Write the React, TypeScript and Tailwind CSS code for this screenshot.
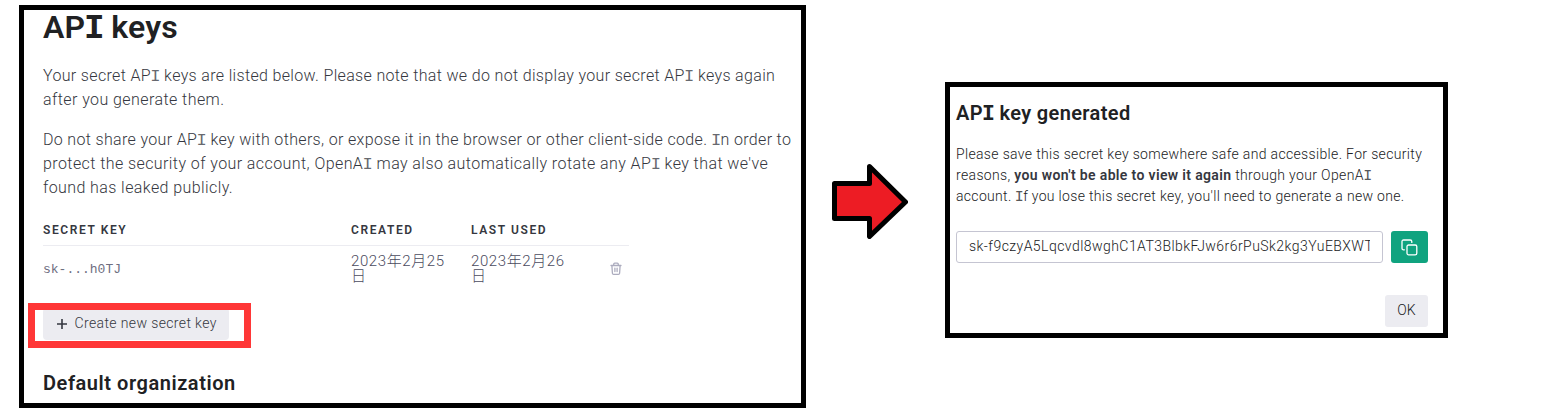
import type { ReactNode } from "react";

const I = ({ soft = false }: { soft?: boolean }) => (
  <span className={`mx-[-0.04em] inline-block text-[1.07em] leading-none tracking-normal [font-family:'Liberation_Mono',monospace] ${soft ? "opacity-75" : ""}`}>I</span>
);

function Line({ className, children }: { className?: string; children: ReactNode }) {
  return <span className={`block whitespace-nowrap ${className ?? ""}`}>{children}</span>;
}

function TrashIcon() {
  return (
    <svg className="mb-px" width="12" height="14" viewBox="0 0 12 14" fill="none" stroke="#acacbe" strokeWidth="1.3" strokeLinejoin="round" strokeLinecap="round">
      <path d="M1 3.5h10M3.7 3.4V2.2q0-1 1-1h2.6q1 0 1 1v1.2M1.9 3.6l.5 7.6q.1 1.2 1.2 1.2h4.8q1.1 0 1.2-1.2l.5-7.6M4.9 6.2v3.4M7.1 6.2v3.4" />
    </svg>
  );
}

function CopyIcon() {
  return (
    <svg width="17" height="17" viewBox="0 0 17 17" fill="none" stroke="#fff" strokeWidth="1.3" strokeLinecap="round" strokeLinejoin="round">
      <rect x="6" y="6" width="9.8" height="9.8" rx="1.6" />
      <path d="M3.4 10.8h-.8q-1.6 0-1.6-1.6V2.6Q1 1 2.6 1h6.6q1.6 0 1.6 1.6v.8" />
    </svg>
  );
}

function KeysPanel() {
  return (
    <section className="h-[403px] w-[787px] shrink-0 border-[5px] border-black pl-[19px]">
      <h1 className="mt-[-1px] h-[36px] whitespace-nowrap text-[32px] font-semibold leading-[36px] tracking-[0.2px] text-[#202123]">
        AP<I /> keys
      </h1>
      <div className="mt-[19px] text-[16px] font-light leading-[24px] text-[#353740]">
        <p>
          <Line className="h-[24px] tracking-[0.34px]">Your secret AP<I soft /> keys are listed below. Please note that we do not display your secret AP<I soft /> keys again</Line>
          <Line className="h-[24px] tracking-[0.43px]">after you generate them.</Line>
        </p>
        <p className="mt-4">
          <Line className="h-[24px] tracking-[0.34px]">Do not share your AP<I soft /> key with others, or expose it in the browser or other client-side code. <I soft />n order to</Line>
          <Line className="h-[24px] tracking-[0.42px]">protect the security of your account, OpenA<I soft /> may also automatically rotate any AP<I soft /> key that we&apos;ve</Line>
          <Line className="h-[24px] tracking-[0.41px]">found has leaked publicly.</Line>
        </p>
      </div>
      <div className="mt-[17px] w-[586px]">
        <div className="grid h-[29px] grid-cols-[308px_120px_1fr] border-b border-[#ececf1] pt-[3px] text-[12px] font-semibold leading-[20px] tracking-[1.6px] text-[#353740]">
          <span>SECRET KEY</span>
          <span>CREATED</span>
          <span>LAST USED</span>
        </div>
        <div className="grid h-[46px] grid-cols-[308px_120px_139px_1fr] items-center text-[#6e6e80]">
          <span className="pt-[2px] text-[13px] leading-[18px] [font-family:'Liberation_Mono',monospace]">sk-...h0TJ</span>
          <span className="w-[96px] whitespace-nowrap text-[15px] font-light leading-[15px] tracking-[0.6px] text-[#4b4b5e]">2023年2月25<br />日</span>
          <span className="w-[96px] whitespace-nowrap text-[15px] font-light leading-[15px] tracking-[0.6px] text-[#4b4b5e]">2023年2月26<br />日</span>
          <TrashIcon />
        </div>
      </div>
      <div className="relative mt-[16px] w-[186px]">
        <button className="flex h-[32px] w-[186px] items-center rounded bg-[#ececf1] pl-[14px] text-[14px] font-light text-[#353740]">
          <svg width="10" height="10" viewBox="0 0 10 10" stroke="#353740" strokeWidth="1.6"><path d="M5 0v10M0 5h10" /></svg>
          <span className="ml-[7.5px] whitespace-nowrap pb-[2px] tracking-[0.38px]">Create new secret key</span>
        </button>
        <div className="absolute -left-[15px] -top-[5px] h-[45px] w-[223px] border-[7px] border-[#ff3737]" />
      </div>
      <h2 className="mt-[31px] whitespace-nowrap text-[20px] font-semibold leading-[24px] tracking-[0.55px] text-[#202123]">Default organization</h2>
    </section>
  );
}

function Arrow() {
  return (
    <svg className="ml-[26px] mt-[159px] shrink-0" width="76" height="75" viewBox="0 0 76 75">
      <path d="M2.5 19.5h35V2.5L73.5 38l-36 34.5v-18h-35z" fill="#ed1c24" stroke="#000" strokeWidth="5" strokeLinejoin="round" />
    </svg>
  );
}

function GeneratedDialog() {
  return (
    <section className="ml-[37px] mt-[77px] h-[256px] w-[503px] shrink-0 border-[5px] border-black pl-[6px] pr-[15px]">
      <h2 className="mt-[14px] h-[24px] whitespace-nowrap text-[20px] font-semibold leading-[24px] tracking-[0.37px] text-[#202123]">AP<I /> key generated</h2>
      <p className="mt-[19px] text-[14px] font-light leading-[21px] text-[#202123]">
        <Line className="h-[21px] tracking-[0.34px]">Please save this secret key somewhere safe and accessible. For security</Line>
        <Line className="h-[21px] tracking-[0.35px]">reasons, <b className="font-semibold tracking-[0.35px] text-[#353740]">you won&apos;t be able to view it again</b> through your OpenA<I soft /></Line>
        <Line className="h-[21px] tracking-[0.32px]">account. <I soft />f you lose this secret key, you&apos;ll need to generate a new one.</Line>
      </p>
      <div className="mt-[24px] flex gap-2">
        <div className="flex h-[32px] w-[427px] items-center rounded-[3px] border border-[#c5c5d2] px-[12px] text-[14px] font-light text-[#202123]">
          <span className="w-[402px] overflow-hidden whitespace-nowrap pb-[2px] tracking-[0.45px]">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</span>
        </div>
        <button className="flex h-[32px] w-[37px] items-center justify-center rounded-[3px] bg-[#10a37f]"><CopyIcon /></button>
      </div>
      <div className="mt-[32px] flex justify-end">
        <button className="h-[32px] w-[43px] rounded-[3px] bg-[#ececf1] pb-[2px] text-[14px] font-light text-[#202123]">OK</button>
      </div>
    </section>
  );
}

export default function App() {
  return (
    <main className="flex h-[412px] w-[1550px] items-start overflow-hidden bg-white pl-[19px] pt-[5px] [font-family:Roboto,'Noto_Sans_CJK_SC',sans-serif]">
      <KeysPanel />
      <Arrow />
      <GeneratedDialog />
    </main>
  );
}
